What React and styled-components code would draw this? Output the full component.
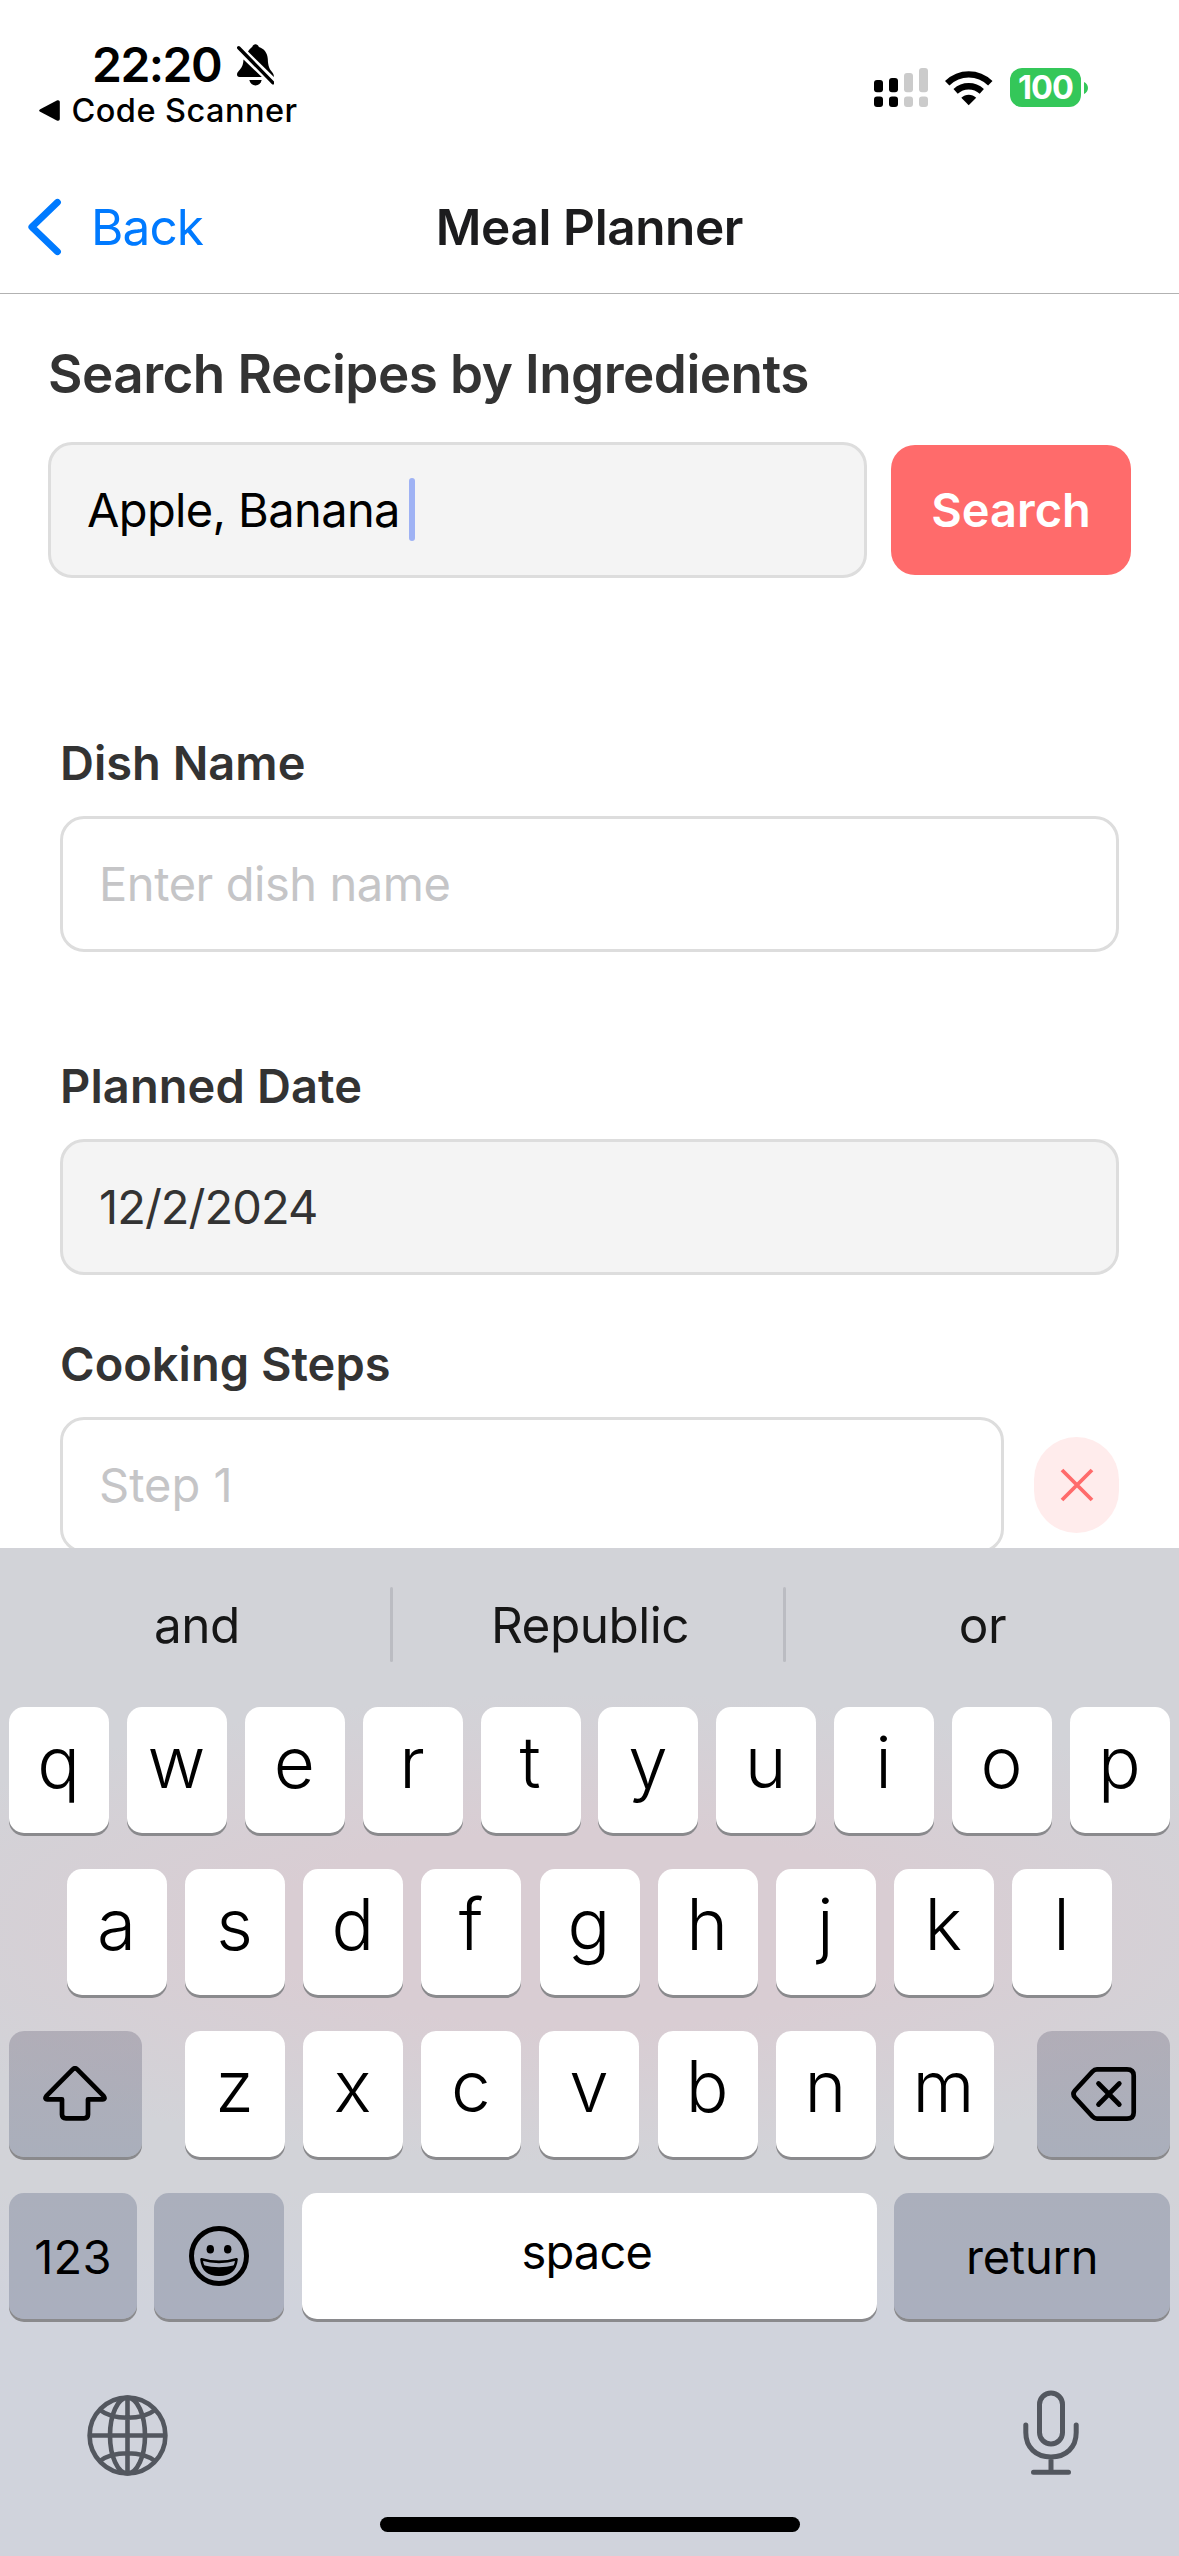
import React from "react";
import styled, { createGlobalStyle } from "styled-components";

const Global = createGlobalStyle`
  *, *::before, *::after { box-sizing: border-box; }
  body { margin: 0; background: #fff; }
`;

const Screen = styled.div`
  width: 1179px;
  height: 2556px;
  overflow: hidden;
  display: flex;
  flex-direction: column;
  background: #fff;
  font-family: Inter, "Liberation Sans", sans-serif;
  white-space: pre;
`;

const StatusBar = styled.header`
  flex: none;
  height: 161px;
  padding: 40px 91px 0 39px;
  display: flex;
  justify-content: space-between;
`;
const StatusLeft = styled.div`
  display: flex;
  flex-direction: column;
`;
const ClockRow = styled.div`
  height: 50px;
  padding-left: 53px;
  display: flex;
  align-items: center;
  gap: 16px;
`;
const Clock = styled.span`
  font-size: 48px;
  font-weight: 600;
  line-height: 50px;
  letter-spacing: -1.5px;
`;
const ReturnLink = styled.div`
  height: 41px;
  display: flex;
  align-items: center;
  gap: 10.5px;
  font-size: 32.5px;
  font-weight: 500;
  line-height: 41px;
  letter-spacing: 0.45px;
`;
const StatusRight = styled.div`
  display: flex;
  align-items: center;
  height: 39px;
  margin-top: 28px;
`;
const Battery = styled.div`
  width: 71px;
  height: 39px;
  margin-left: 17px;
  margin-right: 3px;
  border-radius: 12px;
  background: #34c759;
  color: #fff;
  font-size: 32.5px;
  font-weight: 700;
  line-height: 39px;
  text-align: center;
  letter-spacing: -1px;
`;

const NavBar = styled.nav`
  flex: none;
  height: 133px;
  border-bottom: 1px solid #b2b2b2;
  padding: 0 27px;
  display: grid;
  grid-template-columns: 1fr auto 1fr;
  align-items: center;
`;
const BackLink = styled.a`
  display: flex;
  align-items: center;
  gap: 29px;
  color: #007aff;
  font-size: 49.5px;
  line-height: 60px;
  letter-spacing: -0.9px;
`;
const NavTitle = styled.h1`
  margin: 0;
  color: #1c1c1e;
  font-size: 49.5px;
  font-weight: 600;
  line-height: 60px;
  letter-spacing: -0.4px;
`;

const Content = styled.main`
  flex: 1;
  min-height: 0;
  overflow: hidden;
  padding-top: 50px;
`;
const SectionTitle = styled.h2`
  margin: 0 0 38px;
  padding-left: 48px;
  color: #333;
  font-size: 53px;
  font-weight: 600;
  line-height: 60px;
  letter-spacing: -0.54px;
`;
const SearchRow = styled.div`
  display: flex;
  align-items: center;
  gap: 24px;
  padding: 0 48px;
`;
const Field = styled.div`
  flex: ${(p) => (p.$grow ? 1 : "none")};
  height: 136px;
  border: 3px solid #ddd;
  border-radius: 24px;
  padding: 0 36px;
  display: flex;
  align-items: center;
  background: ${(p) => (p.$filled ? "#f4f4f4" : "#fff")};
  color: ${(p) => p.$color};
  font-size: 47px;
  line-height: 60px;
  letter-spacing: ${(p) => p.$track || 0}px;
`;
const Caret = styled.span`
  width: 6px;
  height: 63px;
  margin: 0 0 2px 9px;
  border-radius: 3px;
  background: #9fb2f4;
`;
const SearchButton = styled.div`
  width: 240px;
  height: 130px;
  border-radius: 24px;
  background: #ff6b6b;
  color: #fff;
  font-size: 47px;
  font-weight: 600;
  line-height: 130px;
  text-align: center;
`;
const Form = styled.div`
  padding: 155px 60px 0;
  display: flex;
  flex-direction: column;
`;
const Group = styled.div`
  display: flex;
  flex-direction: column;
  gap: 23px;
  margin-bottom: ${(p) => p.$after}px;
`;
const Label = styled.label`
  color: #333;
  font-size: 47px;
  font-weight: 600;
  line-height: 60px;
  letter-spacing: ${(p) => p.$track || 0}px;
`;
const StepRow = styled.div`
  display: flex;
  align-items: center;
  gap: 30px;
`;
const RemoveButton = styled.div`
  width: 85px;
  height: 96px;
  border-radius: 42.5px;
  background: #ffecec;
  display: flex;
  align-items: center;
  justify-content: center;
`;

const Keyboard = styled.section`
  flex: none;
  height: 1008px;
  display: flex;
  flex-direction: column;
  background:
    radial-gradient(ellipse 760px 235px at 590px 380px, #d9cdd3 0%, #d9cdd3 42%, rgba(217, 205, 211, 0) 100%),
    linear-gradient(#d2d3d8 0px, #d2d3d8 640px, #d0d3dc 760px);
`;
const Suggestions = styled.div`
  height: 159px;
  padding-bottom: 6px;
  display: grid;
  grid-template-columns: 390px 3px 390px 3px 1fr;
  align-items: center;
`;
const Suggestion = styled.div`
  padding-left: ${(p) => (p.$last ? 0 : 4)}px;
  text-align: center;
  color: #161616;
  font-size: 49.5px;
  line-height: 60px;
  letter-spacing: -0.5px;
`;
const Separator = styled.div`
  height: 75px;
  border-radius: 2px;
  background: #bbbcc2;
`;
const Rows = styled.div`
  display: flex;
  flex-direction: column;
  gap: 36px;
  padding: 0 9px;
`;
const KeyRow = styled.div`
  display: flex;
  justify-content: space-between;
  padding: 0 ${(p) => p.$inset || 0}px;
`;
const LetterGroup = styled.div`
  display: flex;
  justify-content: space-between;
  width: 809px;
`;
const FunctionRow = styled.div`
  display: grid;
  grid-template-columns: 128px 130px 575px 276px;
  column-gap: 17.4px;
`;
const Key = styled.div`
  width: ${(p) => p.$w || "100px"};
  height: 126px;
  border-radius: 15px;
  box-shadow: 0 3px 0 #8a8a8d;
  background: ${(p) => (p.$tint ? "linear-gradient(rgba(142, 138, 153, 0.5), rgba(130, 139, 159, 0.5))" : p.$dark ? "rgba(132, 140, 159, 0.5)" : "#fff")};
  display: flex;
  align-items: center;
  justify-content: center;
  color: #000;
  line-height: 1;
`;
const LetterKey = styled(Key)`
  padding: 0 1px 16px 0;
  font-size: 71px;
  font-weight: 360;
`;
const WordKey = styled(Key)`
  width: auto;
  padding: 0 ${(p) => p.$shift || 0}px ${(p) => p.$lift || 0}px 0;
  font-size: 47px;
  letter-spacing: ${(p) => p.$track || 0}px;
`;
const BottomBar = styled.div`
  display: flex;
  justify-content: space-between;
  align-items: flex-start;
  padding: 71px 100px 0 87px;
`;
const GlobeBox = styled.div`
  padding-top: 5px;
`;
const HomeIndicator = styled.div`
  width: 420px;
  height: 15px;
  margin: auto auto 24px;
  border-radius: 8px;
  background: #000;
`;

const BellSlash = () => (
  <svg width="37" height="42" viewBox="0 0 37 42">
    <path d="M11 7.500C12.600 5 14.500 3.600 15.200 3 15.800 1 17 .2 18.500 .2S21.200 1 21.900 3C27 4.500 30.500 9 30.800 15 31 22 32.500 25 35 28 36.500 29.800 36.900 31 36.900 33Z" />
    <path d="M6.500 15.500 24.800 33H2.500C.8 33 0 32 0 30.500 0 28.500 1.500 27.200 3 25.500 5.500 22.500 6.300 19.500 6.500 15.500Z" />
    <path d="M12.300 36H24.700C24 39.500 21.500 41.400 18.500 41.400S13 39.500 12.300 36Z" />
    <path d="M1.700 3.800 36 38.800" stroke="#fff" strokeWidth="6.400" />
    <path d="M1.700 3.800 36 38.800" stroke="#000" strokeWidth="3.400" strokeLinecap="round" />
  </svg>
);
const Triangle = () => (
  <svg width="22" height="21" viewBox="0 0 22 21">
    <path d="M1.200 9.200 17.800.6C19.500-.2 20.800.5 20.800 2.200V18.800C20.800 20.500 19.500 21.200 17.800 20.400L1.200 11.800C-.2 11-.2 10 1.200 9.200Z" />
  </svg>
);
const Signal = () => (
  <svg width="54" height="39" viewBox="0 0 54 39">
    <g fill="#000">
      <rect x="0" y="12" width="9" height="12.300" rx="3" />
      <rect x="15" y="10" width="9" height="14.300" rx="3" />
      <rect x="0" y="28.500" width="9" height="10.500" rx="3" />
      <rect x="15" y="28.500" width="9" height="10.500" rx="3" />
    </g>
    <g fill="#cbcbcb">
      <rect x="30" y="5" width="9" height="19.300" rx="3" />
      <rect x="45" y="0" width="9" height="24.300" rx="3" />
      <rect x="30" y="28.500" width="9" height="10.500" rx="3" />
      <rect x="45" y="28.500" width="9" height="10.500" rx="3" />
    </g>
  </svg>
);
const WifiIcon = styled.svg`
  margin-left: 17px;
`;
const Wifi = () => (
  <WifiIcon width="48" height="36" viewBox="0 0 48 36">
    <path d="M23.700 35.300 16.300 27.700C20.500 23.600 27 23.600 31.200 27.700Z" />
    <path d="M10.600 21.300C18.200 14.600 29.200 14.600 36.800 21.300" fill="none" stroke="#000" strokeWidth="6.400" />
    <path d="M2.200 13.200C14.600 1.400 32.900 1.400 45.300 13.200" fill="none" stroke="#000" strokeWidth="6.400" />
  </WifiIcon>
);
const BatteryTip = () => (
  <svg width="4" height="12" viewBox="0 0 4 12">
    <path d="M0 0C2.500 1 4 3.500 4 6S2.500 11 0 12Z" fill="#34c759" />
  </svg>
);
const Chevron = () => (
  <svg width="35" height="58" viewBox="0 0 35 58">
    <path d="M30.500 4.300 4.800 29 30.500 53.700" fill="none" stroke="#007aff" strokeWidth="6.800" strokeLinecap="round" strokeLinejoin="round" />
  </svg>
);
const Cross = () => (
  <svg width="34" height="34" viewBox="0 0 34 34">
    <path d="M2 2 32 32M32 2 2 32" stroke="#ff6b6b" strokeWidth="3.800" />
  </svg>
);
const ShiftIcon = () => (
  <svg width="65" height="56" viewBox="0 0 65 56">
    <path d="M30 3.200Q32 1.400 34 3.200L60.500 29.800Q63 33.200 59.500 33.300H45V48.500Q45 52.300 41 52.300H23Q19 52.300 19 48.500V33.300H4.500Q1 33.200 3.500 29.800Z" fill="none" stroke="#000" strokeWidth="4.700" strokeLinejoin="round" />
  </svg>
);
const DeleteIcon = () => (
  <svg width="66" height="56" viewBox="0 0 66 56">
    <path d="M26 3.300H56Q62.700 3.300 62.700 9.500V46.500Q62.700 52.700 56 52.700H26Q23.500 52.700 21.500 50.500L4 31.500Q1 28 4 24.500L21.500 5.500Q23.500 3.300 26 3.300Z" fill="none" stroke="#000" strokeWidth="4.700" strokeLinejoin="round" />
    <path d="M27.500 17.500 48.300 38.500M48.300 17.500 27.500 38.500" stroke="#000" strokeWidth="4.700" strokeLinecap="round" />
  </svg>
);
const EmojiIcon = () => (
  <svg width="60" height="60" viewBox="0 0 60 60">
    <circle cx="30" cy="30" r="27.500" fill="none" stroke="#000" strokeWidth="5" />
    <ellipse cx="21.300" cy="23.300" rx="3.700" ry="4.300" />
    <ellipse cx="38.700" cy="23.300" rx="3.700" ry="4.300" />
    <path d="M12.500 33.300Q30 38.500 47.500 33.300Q46 48.700 30 48.700T12.500 33.300Z" fill="none" stroke="#000" strokeWidth="2.600" strokeLinejoin="round" />
    <path d="M14.500 39.200Q30 43.200 45.500 39.200Q42 49.500 30 49.500T14.500 39.200Z" />
  </svg>
);
const GlobeIcon = () => (
  <svg width="81" height="81" viewBox="0 0 81 81">
    <g fill="none" stroke="#53575f" strokeWidth="4.600">
      <circle cx="40.500" cy="40.500" r="37.900" />
      <ellipse cx="40.500" cy="40.500" rx="17.500" ry="37.900" />
      <path d="M40.500 2.600V78.400M2.600 40.500H78.400M13 15C20 20.500 30 22.800 40.500 22.800S61 20.500 68 15M13 66C20 60.500 30 58.200 40.500 58.200S61 60.500 68 66" />
    </g>
  </svg>
);
const MicIcon = () => (
  <svg width="56" height="86" viewBox="0 0 56 86">
    <g fill="none" stroke="#53575f" strokeWidth="5" strokeLinecap="round">
      <rect x="16.500" y="3" width="23" height="51" rx="11.500" />
      <path d="M2.800 35V42.500C2.800 57.500 13 67 28 67S53.200 57.500 53.200 42.500V35M28 67V82M10.500 82.300H45.500" />
    </g>
  </svg>
);

const letters = (row) => [...row].map((c) => <LetterKey key={c}>{c}</LetterKey>);

export default function App() {
  return (
    <Screen>
      <Global />
      <StatusBar>
        <StatusLeft>
          <ClockRow>
            <Clock>22:20</Clock>
            <BellSlash />
          </ClockRow>
          <ReturnLink>
            <Triangle />
            Code Scanner
          </ReturnLink>
        </StatusLeft>
        <StatusRight>
          <Signal />
          <Wifi />
          <Battery>100</Battery>
          <BatteryTip />
        </StatusRight>
      </StatusBar>
      <NavBar>
        <BackLink>
          <Chevron />
          Back
        </BackLink>
        <NavTitle>Meal Planner</NavTitle>
      </NavBar>
      <Content>
        <SectionTitle>Search Recipes by Ingredients</SectionTitle>
        <SearchRow>
          <Field $grow $filled $color="#000" $track={-0.63}>
            Apple, Banana
            <Caret />
          </Field>
          <SearchButton>Search</SearchButton>
        </SearchRow>
        <Form>
          <Group $after={104}>
            <Label>Dish Name</Label>
            <Field $color="#c5c5c7" $track={-0.43}>Enter dish name</Field>
          </Group>
          <Group $after={59}>
            <Label $track={0.1}>Planned Date</Label>
            <Field $filled $color="#333" $track={-0.95}>12/2/2024</Field>
          </Group>
          <Group $after={0}>
            <Label>Cooking Steps</Label>
            <StepRow>
              <Field $grow $color="#c5c5c7">Step 1</Field>
              <RemoveButton>
                <Cross />
              </RemoveButton>
            </StepRow>
          </Group>
        </Form>
      </Content>
      <Keyboard>
        <Suggestions>
          <Suggestion>and</Suggestion>
          <Separator />
          <Suggestion>Republic</Suggestion>
          <Separator />
          <Suggestion $last>or</Suggestion>
        </Suggestions>
        <Rows>
          <KeyRow>{letters("qwertyuiop")}</KeyRow>
          <KeyRow $inset={58}>{letters("asdfghjkl")}</KeyRow>
          <KeyRow>
            <Key $w="133px" $tint>
              <ShiftIcon />
            </Key>
            <LetterGroup>{letters("zxcvbnm")}</LetterGroup>
            <Key $w="133px" $tint>
              <DeleteIcon />
            </Key>
          </KeyRow>
          <FunctionRow>
            <WordKey $dark $track={0.3}>123</WordKey>
            <Key $w="auto" $dark>
              <EmojiIcon />
            </Key>
            <WordKey $lift={10} $shift={5} $track={-0.8}>space</WordKey>
            <WordKey $dark $track={-0.2}>return</WordKey>
          </FunctionRow>
        </Rows>
        <BottomBar>
          <GlobeBox>
            <GlobeIcon />
          </GlobeBox>
          <MicIcon />
        </BottomBar>
        <HomeIndicator />
      </Keyboard>
    </Screen>
  );
}
